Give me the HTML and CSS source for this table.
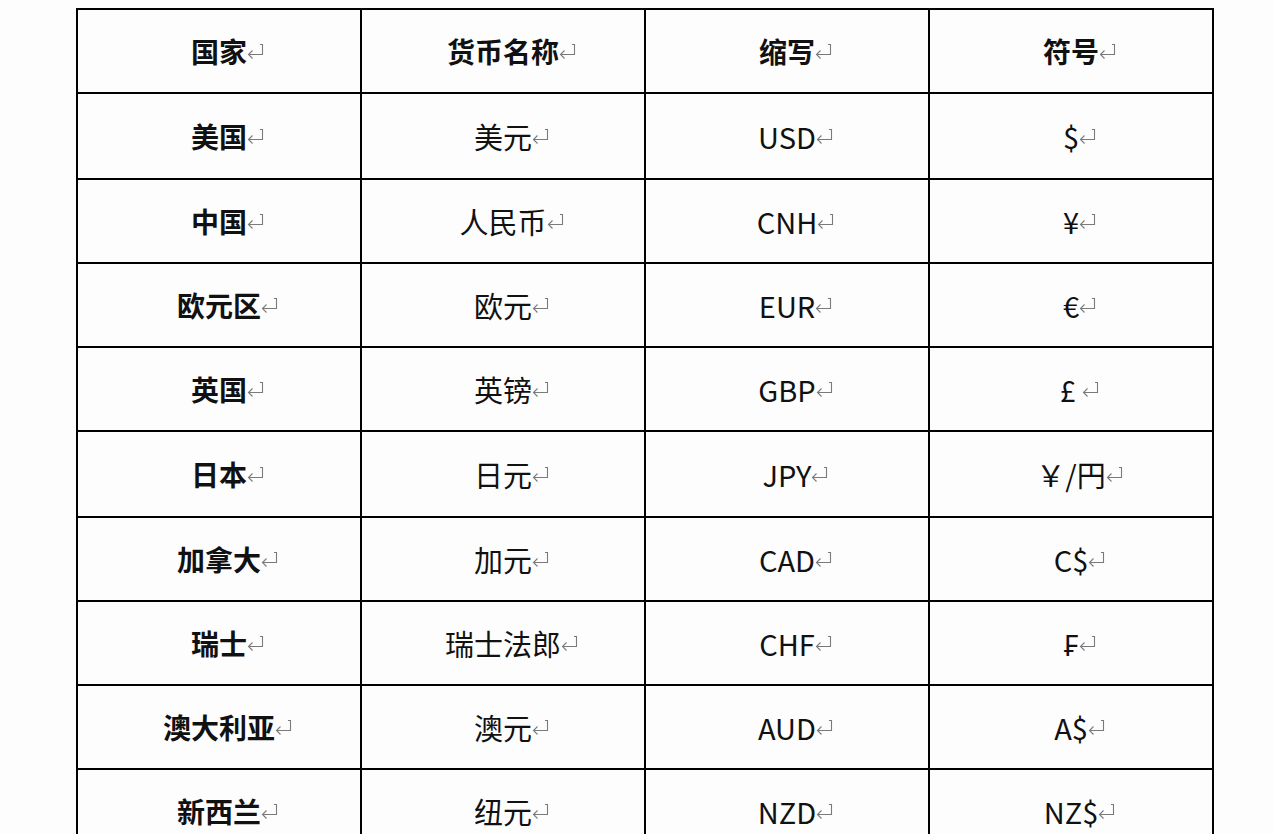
FILE: index.html
```html
<!DOCTYPE html>
<html lang="zh-CN">
<head>
<meta charset="utf-8">
<link rel="stylesheet" href="styles.css">
</head>
<body>
<svg width="0" height="0" class="defs">
  <symbol id="ret" viewBox="0 0 17 15">
    <path d="M13 0.5 H15.5 V10.5 H1.5 M5.5 6.5 L1.5 10.5 L5.5 14.5" fill="none" stroke="#7a7a7a" stroke-width="1.1"/>
  </symbol>
</svg>
<table class="cur">
  <tr class="h">
    <td class="b"><span class="t">国家<svg class="r"><use href="#ret"/></svg></span></td>
    <td class="b"><span class="t">货币名称<svg class="r"><use href="#ret"/></svg></span></td>
    <td class="b"><span class="t">缩写<svg class="r"><use href="#ret"/></svg></span></td>
    <td class="b"><span class="t">符号<svg class="r"><use href="#ret"/></svg></span></td>
  </tr>
  <tr class="tall">
    <td class="b"><span class="t">美国<svg class="r"><use href="#ret"/></svg></span></td>
    <td><span class="t">美元<svg class="r"><use href="#ret"/></svg></span></td>
    <td><span class="t">USD<svg class="r"><use href="#ret"/></svg></span></td>
    <td><span class="t">$<svg class="r"><use href="#ret"/></svg></span></td>
  </tr>
  <tr>
    <td class="b"><span class="t">中国<svg class="r"><use href="#ret"/></svg></span></td>
    <td><span class="t">人民币<svg class="r"><use href="#ret"/></svg></span></td>
    <td><span class="t">CNH<svg class="r"><use href="#ret"/></svg></span></td>
    <td><span class="t">¥<svg class="r"><use href="#ret"/></svg></span></td>
  </tr>
  <tr>
    <td class="b"><span class="t">欧元区<svg class="r"><use href="#ret"/></svg></span></td>
    <td><span class="t">欧元<svg class="r"><use href="#ret"/></svg></span></td>
    <td><span class="t">EUR<svg class="r"><use href="#ret"/></svg></span></td>
    <td><span class="t">€<svg class="r"><use href="#ret"/></svg></span></td>
  </tr>
  <tr>
    <td class="b"><span class="t">英国<svg class="r"><use href="#ret"/></svg></span></td>
    <td><span class="t">英镑<svg class="r"><use href="#ret"/></svg></span></td>
    <td><span class="t">GBP<svg class="r"><use href="#ret"/></svg></span></td>
    <td><span class="t">£&nbsp;<svg class="r"><use href="#ret"/></svg></span></td>
  </tr>
  <tr class="tall">
    <td class="b"><span class="t">日本<svg class="r"><use href="#ret"/></svg></span></td>
    <td><span class="t">日元<svg class="r"><use href="#ret"/></svg></span></td>
    <td><span class="t">JPY<svg class="r"><use href="#ret"/></svg></span></td>
    <td><span class="t">￥/円<svg class="r"><use href="#ret"/></svg></span></td>
  </tr>
  <tr>
    <td class="b"><span class="t">加拿大<svg class="r"><use href="#ret"/></svg></span></td>
    <td><span class="t">加元<svg class="r"><use href="#ret"/></svg></span></td>
    <td><span class="t">CAD<svg class="r"><use href="#ret"/></svg></span></td>
    <td><span class="t">C$<svg class="r"><use href="#ret"/></svg></span></td>
  </tr>
  <tr>
    <td class="b"><span class="t">瑞士<svg class="r"><use href="#ret"/></svg></span></td>
    <td><span class="t">瑞士法郎<svg class="r"><use href="#ret"/></svg></span></td>
    <td><span class="t">CHF<svg class="r"><use href="#ret"/></svg></span></td>
    <td><span class="t">₣<svg class="r"><use href="#ret"/></svg></span></td>
  </tr>
  <tr>
    <td class="b"><span class="t">澳大利亚<svg class="r"><use href="#ret"/></svg></span></td>
    <td><span class="t">澳元<svg class="r"><use href="#ret"/></svg></span></td>
    <td><span class="t">AUD<svg class="r"><use href="#ret"/></svg></span></td>
    <td><span class="t">A$<svg class="r"><use href="#ret"/></svg></span></td>
  </tr>
  <tr>
    <td class="b"><span class="t">新西兰<svg class="r"><use href="#ret"/></svg></span></td>
    <td><span class="t">纽元<svg class="r"><use href="#ret"/></svg></span></td>
    <td><span class="t">NZD<svg class="r"><use href="#ret"/></svg></span></td>
    <td><span class="t">NZ$<svg class="r"><use href="#ret"/></svg></span></td>
  </tr>
</table>
</body>
</html>
```
FILE: styles.css
```css
html, body {
  margin: 0;
  padding: 0;
  background: #fefdfe;
  overflow: hidden;
}
body {
  padding: 8px 0 0 76px;
  font-family: "Noto Sans CJK SC", "Noto Sans", sans-serif;
  color: #111;
}
.defs {
  position: absolute;
  width: 0;
  height: 0;
}
.cur {
  border-collapse: collapse;
  table-layout: fixed;
  width: 1138px;
}
.cur td {
  border: 2px solid #000;
  height: 82px;
  padding: 0;
  text-align: center;
  vertical-align: middle;
  font-size: 29px;
  line-height: 34px;
  font-weight: 400;
}
.cur tr.tall td {
  height: 84px;
}
.cur td.b {
  font-weight: 700;
  font-size: 28px;
}
.t {
  position: relative;
  display: inline-block;
}
.r {
  position: absolute;
  left: 100%;
  top: 10px;
  width: 17px;
  height: 15px;
}
```
